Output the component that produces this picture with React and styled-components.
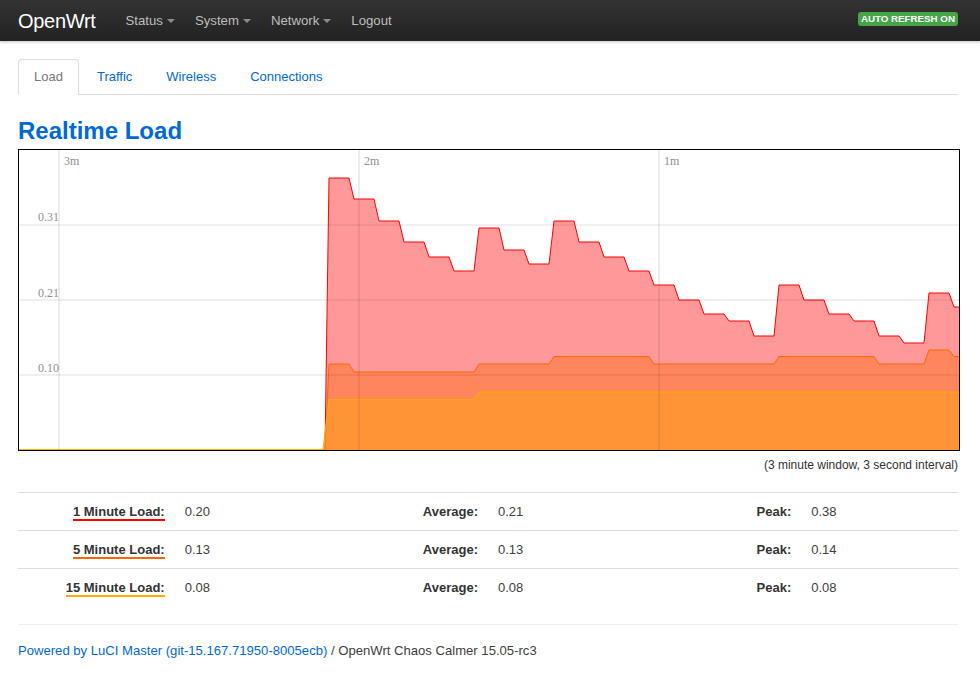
import React from "react";
import styled, { createGlobalStyle } from "styled-components";

const GlobalStyle = createGlobalStyle`
  html, body { margin: 0; padding: 0; background: #fff; }
  body {
    font-family: "Liberation Sans", Arial, Helvetica, sans-serif;
    font-size: 13px;
    line-height: 18px;
    color: #404040;
  }
  * { box-sizing: border-box; }
`;

const Topbar = styled.header`
  height: 41px;
  background: linear-gradient(to bottom, #333 0%, #222 100%);
  box-shadow: 0 1px 3px rgba(0, 0, 0, 0.25);
`;

const TopInner = styled.div`
  width: 940px;
  margin-left: 18px;
  height: 100%;
  display: flex;
  align-items: center;
`;

const Brand = styled.a`
  font-size: 20px;
  color: #fff;
  text-decoration: none;
  margin-right: 20px;
  letter-spacing: -0.3px;
  line-height: 20px;
`;

const Nav = styled.nav`
  display: flex;
  align-items: center;
`;

const NavItem = styled.a`
  display: flex;
  align-items: center;
  gap: 4px;
  padding: 0 10px;
  color: #bfbfbf;
  font-size: 13.2px;
  text-decoration: none;
`;

const Caret = styled.span`
  width: 0;
  height: 0;
  margin-top: 1px;
  border-left: 4px solid transparent;
  border-right: 4px solid transparent;
  border-top: 4px solid #8c8c8c;
`;

const Badge = styled.span`
  margin-left: auto;
  background: #46a546;
  color: #fff;
  font-weight: bold;
  font-size: 9.75px;
  line-height: 11px;
  padding: 1px 3px 2px;
  border-radius: 3px;
  text-transform: uppercase;
  white-space: nowrap;
  margin-top: -3px;
`;

const Container = styled.main`
  width: 940px;
  margin-left: 18px;
`;

const Tabs = styled.ul`
  list-style: none;
  margin: 18px 0 0;
  padding: 0;
  display: flex;
  border-bottom: 1px solid #ddd;
  height: 36px;
`;

const Tab = styled.li`
  margin-right: 2px;
  margin-bottom: -1px;
  padding: 0 15px;
  line-height: 34px;
  font-size: 13px;
  border: 1px solid ${(p) => (p.$active ? "#ddd" : "transparent")};
  border-bottom-color: ${(p) => (p.$active ? "#fff" : "transparent")};
  border-radius: 4px 4px 0 0;
  background: ${(p) => (p.$active ? "#fff" : "transparent")};
  color: ${(p) => (p.$active ? "#777" : "#0069d6")};
  cursor: pointer;
`;

const Title = styled.h2`
  margin: 18px 0 0;
  font-size: 24px;
  line-height: 36px;
  font-weight: bold;
  color: #0069d6;
`;

const ChartBox = styled.div`
  width: 942px;
  height: 302px;
  border: 1px solid #000;
  background: #fff;
`;

const ChartSvg = styled.svg`
  display: block;
  width: 940px;
  height: 300px;
`;

const Caption = styled.div`
  margin-top: 5px;
  text-align: right;
  font-size: 12px;
  line-height: 18px;
  color: #333;
`;

const StatsTable = styled.table`
  margin-top: 18px;
  width: 940px;
  table-layout: fixed;
  border-collapse: collapse;
`;

const Row = styled.tr`
  border-top: 1px solid #ddd;
`;

const Cell = styled.td`
  padding: 10px 10px 9px;
  line-height: 18px;
  font-size: 13px;
  text-align: ${(p) => (p.$right ? "right" : "left")};
  vertical-align: top;
  color: #404040;
`;

const Label = styled.strong`
  font-weight: bold;
  white-space: nowrap;
  color: #333;
  border-bottom: ${(p) => (p.$color ? `2px solid ${p.$color}` : "none")};
`;

const Footer = styled.footer`
  margin-top: 18px;
  border-top: 1px solid #eee;
  padding-top: 17px;
  font-size: 13.1px;
  line-height: 18px;
  color: #404040;
`;

const Link = styled.a`
  color: #0069d6;
  text-decoration: none;
`;

/* ---------- chart data ---------- */
const RED = [178, 199, 221, 242, 257, 271, 228, 250, 264, 221, 242, 257, 271, 285, 300, 314, 321, 336, 285, 300, 314, 321, 336, 343, 293, 307];
const ORANGE = [364, 372, 372, 372, 372, 372, 364, 364, 364, 356.5, 356.5, 356.5, 356.5, 364, 364, 364, 364, 364, 356.5, 356.5, 356.5, 356.5, 364, 364, 350, 356.5];
const YELLOW = [399.5, 399.5, 399.5, 399.5, 399.5, 399.5, ...Array(20).fill(392)];

function linePoints(values, startX) {
  const pts = [[19, 449.5], [startX, 449.5]];
  values.forEach((v, k) => {
    const a = 329 + 25 * k;
    const b = Math.min(349 + 25 * k, 959);
    pts.push([a, v], [b, v]);
  });
  return pts;
}

const toD = (pts) => pts.map((p, i) => `${i ? "L" : "M"}${p[0]},${p[1]}`).join(" ");

const SERIES = [
  { values: RED, start: 325, stroke: "#ff0000", fill: "rgba(255,0,0,0.4)" },
  { values: ORANGE, start: 325, stroke: "#ff6600", fill: "rgba(255,102,0,0.4)" },
  { values: YELLOW, start: 323, stroke: "#ffaa00", fill: "rgba(255,170,0,0.4)" },
];

function LoadChart() {
  return (
    <ChartBox>
      <ChartSvg viewBox="0 0 940 300">
        <g transform="translate(-19 -150)">
          {SERIES.map((s) => {
            const pts = linePoints(s.values, s.start);
            const line = toD(pts);
            return (
              <g key={s.stroke}>
                <path d={`${line} L959,450 L19,450 Z`} fill={s.fill} stroke="none" />
                <path d={line} fill="none" stroke={s.stroke} strokeWidth="1" />
              </g>
            );
          })}
          {[59, 359, 659].map((x) => (
            <line key={x} x1={x} y1={150} x2={x} y2={450} stroke="rgba(0,0,0,0.07)" strokeWidth="2" />
          ))}
          {[225, 300, 375].map((y) => (
            <line key={y} x1={19} y1={y} x2={959} y2={y} stroke="rgba(0,0,0,0.06)" strokeWidth="2" />
          ))}
          <g fontFamily="'Liberation Serif', 'Times New Roman', serif" fontSize="12" fill="#8f8f8f">
            <text x="64" y="164.5">3m</text>
            <text x="364" y="164.5">2m</text>
            <text x="664" y="164.5">1m</text>
            <text x="59" y="221" textAnchor="end">0.31</text>
            <text x="59" y="297" textAnchor="end">0.21</text>
            <text x="59" y="371.5" textAnchor="end">0.10</text>
          </g>
        </g>
      </ChartSvg>
    </ChartBox>
  );
}

const STATS = [
  { label: "1 Minute Load:", color: "#ff0000", cur: "0.20", avg: "0.21", peak: "0.38" },
  { label: "5 Minute Load:", color: "#ff6600", cur: "0.13", avg: "0.13", peak: "0.14" },
  { label: "15 Minute Load:", color: "#ffaa00", cur: "0.08", avg: "0.08", peak: "0.08" },
];

export default function App() {
  return (
    <>
      <GlobalStyle />
      <Topbar>
        <TopInner>
          <Brand href="#">OpenWrt</Brand>
          <Nav>
            <NavItem href="#">Status<Caret /></NavItem>
            <NavItem href="#">System<Caret /></NavItem>
            <NavItem href="#">Network<Caret /></NavItem>
            <NavItem href="#">Logout</NavItem>
          </Nav>
          <Badge>Auto Refresh On</Badge>
        </TopInner>
      </Topbar>
      <Container>
        <Tabs>
          <Tab $active>Load</Tab>
          <Tab>Traffic</Tab>
          <Tab>Wireless</Tab>
          <Tab>Connections</Tab>
        </Tabs>
        <Title>Realtime Load</Title>
        <LoadChart />
        <Caption>(3 minute window, 3 second interval)</Caption>
        <StatsTable>
          <tbody>
            {STATS.map((s) => (
              <Row key={s.label}>
                <Cell $right><Label $color={s.color}>{s.label}</Label></Cell>
                <Cell>{s.cur}</Cell>
                <Cell $right><Label>Average:</Label></Cell>
                <Cell>{s.avg}</Cell>
                <Cell $right><Label>Peak:</Label></Cell>
                <Cell>{s.peak}</Cell>
              </Row>
            ))}
          </tbody>
        </StatsTable>
        <Footer>
          <Link href="#">Powered by LuCI Master (git-15.167.71950-8005ecb)</Link> / OpenWrt Chaos Calmer 15.05-rc3
        </Footer>
      </Container>
    </>
  );
}
